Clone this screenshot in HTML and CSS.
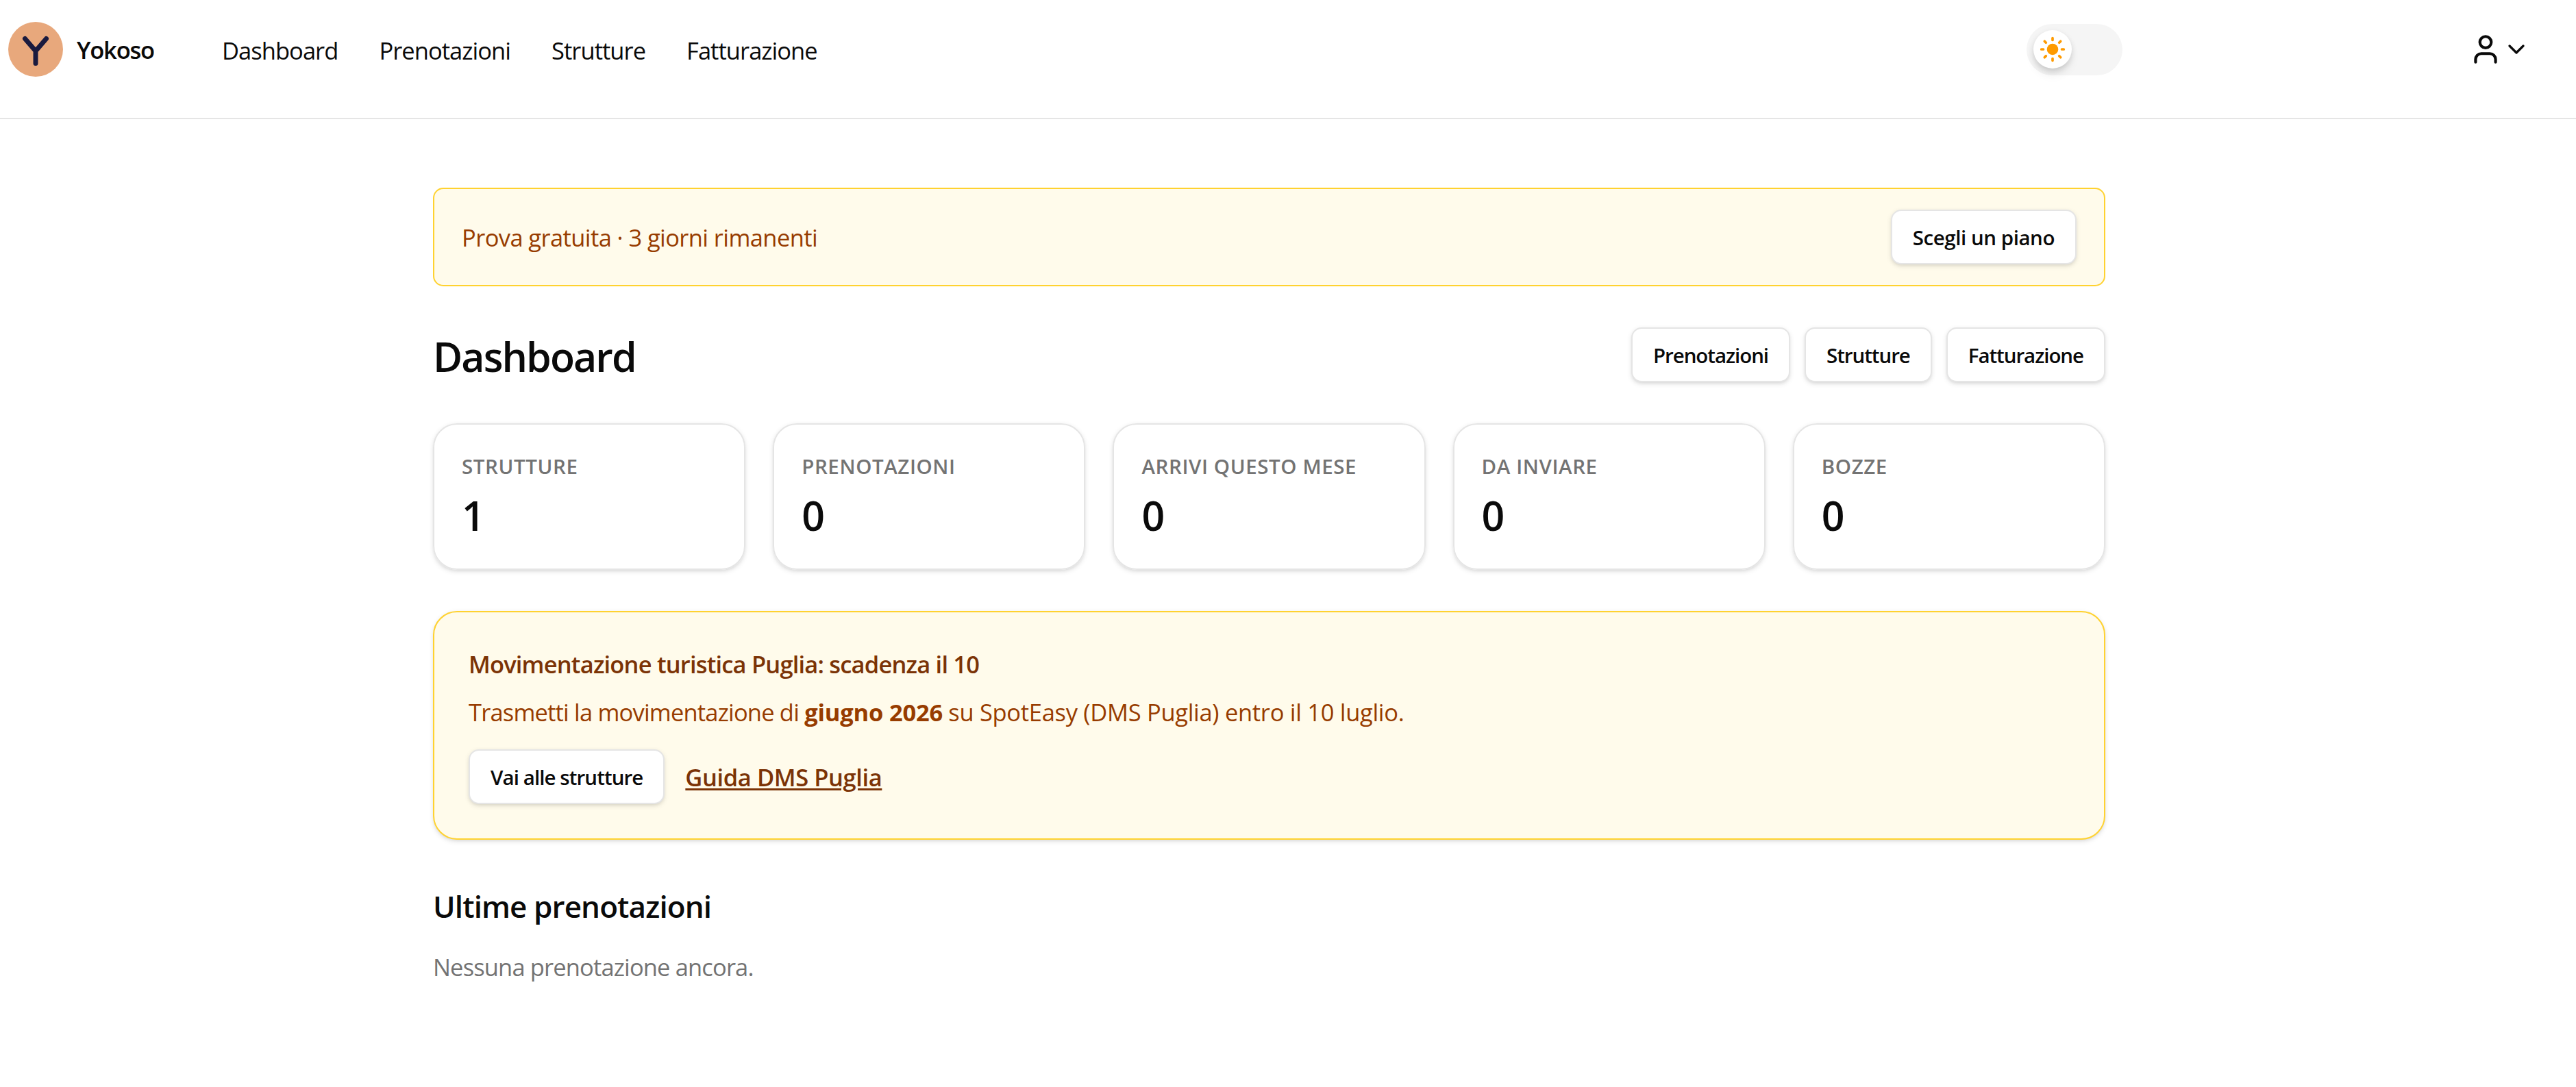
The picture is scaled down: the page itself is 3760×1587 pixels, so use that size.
FILE: index.html
```html
<!DOCTYPE html>
<html lang="it">
<head>
    <meta charset="UTF-8">
    <title>Yokoso - Dashboard</title>
    <link rel="stylesheet" href="styles.css">
</head>
<body>
    <header class="topbar">
        <a class="brand" href="#">
            <svg class="logo" viewBox="0 0 80 80">
                <circle cx="40" cy="40" r="40" fill="#e8a87c"/>
                <path d="M24.5 24.5 40 42.5 55.5 24.5M40 42.5V60.5" fill="none" stroke="#1a1a3e" stroke-width="7" stroke-linecap="round" stroke-linejoin="round"/>
            </svg>
            <span class="brand-name">Yokoso</span>
        </a>
        <nav class="menu">
            <a href="#">Dashboard</a>
            <a href="#">Prenotazioni</a>
            <a href="#">Strutture</a>
            <a href="#">Fatturazione</a>
        </nav>
        <div class="toggle">
            <span class="thumb">
                <svg class="sun" viewBox="-20 -20 40 40">
                    <circle r="8.3" fill="#fe9a00"/>
                    <path d="M0-16.3V-13.5M0 16.3V13.5M-16.3 0H-13.5M16.3 0H13.5M-11.7-11.7-9.7-9.7M11.7-11.7 9.7-9.7M-11.7 11.7-9.7 9.7M11.7 11.7 9.7 9.7" stroke="#fe9a00" stroke-width="3.7" stroke-linecap="round"/>
                </svg>
            </span>
        </div>
        <div class="account">
            <svg class="user" viewBox="0 0 24 24"><path d="M19 21v-2a4 4 0 0 0-4-4H9a4 4 0 0 0-4 4v2"/><circle cx="12" cy="7" r="4"/></svg>
            <svg class="chevron" viewBox="0 0 24 24"><path d="m6 9 6 6 6-6"/></svg>
        </div>
    </header>

    <main>
        <section class="trial">
            <p>Prova gratuita · 3 giorni rimanenti</p>
            <a class="button" href="#">Scegli un piano</a>
        </section>

        <div class="heading">
            <h1>Dashboard</h1>
            <div class="actions">
                <a class="button" href="#">Prenotazioni</a>
                <a class="button" href="#">Strutture</a>
                <a class="button" href="#">Fatturazione</a>
            </div>
        </div>

        <section class="stats">
            <div class="card"><h3>Strutture</h3><p>1</p></div>
            <div class="card"><h3>Prenotazioni</h3><p>0</p></div>
            <div class="card"><h3>Arrivi questo mese</h3><p>0</p></div>
            <div class="card"><h3>Da inviare</h3><p>0</p></div>
            <div class="card"><h3>Bozze</h3><p>0</p></div>
        </section>

        <section class="notice">
            <h3>Movimentazione turistica Puglia: scadenza il 10</h3>
            <p>Trasmetti la movimentazione di <strong>giugno 2026</strong> <span class="channel">su SpotEasy (DMS Puglia) entro il 10 luglio.</span></p>
            <div class="notice-links">
                <a class="button" href="#">Vai alle strutture</a>
                <a class="guide" href="#">Guida DMS Puglia</a>
            </div>
        </section>

        <section class="latest">
            <h2>Ultime prenotazioni</h2>
            <p>Nessuna prenotazione ancora.</p>
        </section>
    </main>
</body>
</html>
```
FILE: styles.css
```css
* {
    box-sizing: border-box;
}

body {
    margin: 0;
    font-family: "Open Sans", sans-serif;
    font-size: 34.5px;
    line-height: 50px;
    color: #0a0a0a;
    background-color: #fff;
}

h1, h2, h3, p {
    margin: 0;
    font-weight: 600;
}

p {
    font-weight: 400;
}

a {
    color: inherit;
    text-decoration: none;
}

.topbar {
    display: flex;
    align-items: center;
    height: 174px;
    padding: 0 67px 28px 12px;
    border-bottom: 2px solid #e5e5e5;
}

.brand {
    display: flex;
    align-items: center;
    gap: 20px;
    width: 312px;
    font-weight: 600;
    letter-spacing: -1.2px;
}

.brand-name {
    padding-top: 1px;
}

.logo {
    width: 80px;
    height: 80px;
}

.menu {
    display: flex;
    gap: 60px;
    padding-top: 4px;
    letter-spacing: -0.96px;
}

.toggle {
    display: flex;
    align-items: center;
    width: 140px;
    height: 75px;
    margin-left: auto;
    padding: 0 10px;
    border-radius: 38px;
    background-color: #f5f5f5;
}

.thumb {
    display: flex;
    align-items: center;
    justify-content: center;
    width: 56px;
    height: 56px;
    border-radius: 50%;
    background-color: #fff;
    box-shadow: 0 10px 15px -3px rgba(0, 0, 0, 0.1), 0 3px 8px rgba(0, 0, 0, 0.12);
}

.sun {
    width: 40px;
    height: 40px;
}

.account {
    display: flex;
    align-items: center;
    margin-left: 505px;
}

.account svg {
    fill: none;
    stroke: #0a0a0a;
    stroke-width: 2;
    stroke-linecap: round;
    stroke-linejoin: round;
}

.user {
    width: 50px;
    height: 50px;
}

.chevron {
    width: 40px;
    height: 40px;
}

main {
    display: flex;
    flex-direction: column;
    gap: 60px;
    width: 2441px;
    margin-left: 632px;
    padding-top: 100px;
}

.button {
    height: 80px;
    padding: 0 30px;
    border: 2px solid #e5e5e5;
    border-radius: 15px;
    background-color: #fff;
    box-shadow: 0 2.5px 7.5px rgba(0, 0, 0, 0.1), 0 2.5px 5px -2.5px rgba(0, 0, 0, 0.1);
    color: #0a0a0a;
    font-size: 29.5px;
    font-weight: 600;
    line-height: 78px;
    letter-spacing: -1.05px;
}

.trial {
    display: flex;
    align-items: center;
    justify-content: space-between;
    padding: 30px 40px;
    border: 2px solid #ffd230;
    border-radius: 15px;
    background-color: #fffbeb;
    color: #973c00;
    letter-spacing: -0.6px;
}

.trial p {
    padding-top: 2px;
}

.trial .button {
    letter-spacing: -0.44px;
}

.heading {
    display: flex;
    align-items: center;
    justify-content: space-between;
    height: 80px;
}

.heading h1 {
    padding-top: 4px;
    font-size: 59px;
    line-height: 76px;
    letter-spacing: -1.9px;
}

.actions {
    display: flex;
    gap: 21px;
}

.stats {
    display: grid;
    grid-template-columns: repeat(5, 1fr);
    gap: 40px;
}

.card {
    padding: 41px 40px 38px;
    border: 2px solid #e5e5e5;
    border-radius: 35px;
    box-shadow: 0 2.5px 7.5px rgba(0, 0, 0, 0.1), 0 2.5px 5px -2.5px rgba(0, 0, 0, 0.1);
}

.card h3 {
    color: #737373;
    font-size: 29.5px;
    line-height: 40px;
    letter-spacing: 0.6px;
    text-transform: uppercase;
}

.card p {
    margin-top: 11px;
    font-size: 59px;
    font-weight: 600;
    line-height: 80px;
}

.notice {
    padding: 51px 50px 50px;
    border: 2px solid #ffd230;
    border-radius: 35px;
    background-color: #fffbeb;
    box-shadow: 0 2.5px 7.5px rgba(0, 0, 0, 0.1), 0 2.5px 5px -2.5px rgba(0, 0, 0, 0.1);
    color: #973c00;
    letter-spacing: -0.82px;
}

.notice h3 {
    color: #7b3306;
    font-size: 34.5px;
}

.notice p {
    margin-top: 20px;
}

.notice strong {
    font-weight: 700;
    letter-spacing: -0.2px;
}

.channel {
    letter-spacing: -0.3px;
}

.notice-links {
    display: flex;
    align-items: center;
    gap: 30px;
    margin-top: 29px;
}

.notice .button {
    letter-spacing: -0.92px;
}

.guide {
    padding-top: 1px;
    color: #7b3306;
    font-weight: 600;
    letter-spacing: -0.41px;
    text-decoration: underline;
    text-decoration-thickness: 3px;
    text-underline-offset: 3px;
}

.latest h2 {
    padding-top: 2px;
    font-size: 44px;
    line-height: 70px;
    letter-spacing: -0.9px;
}

.latest p {
    margin-top: 29px;
    color: #737373;
    letter-spacing: -0.86px;
}
```
